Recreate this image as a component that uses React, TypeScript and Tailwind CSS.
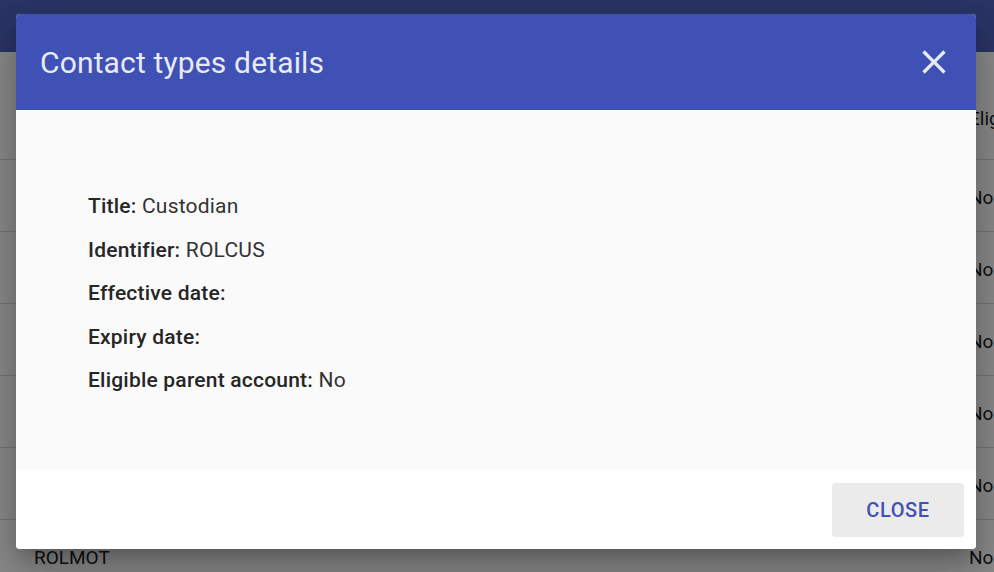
const rows = [
  {id: 'ROLAAA', eligible: 'No'},
  {id: 'ROLCUS', eligible: 'No'},
  {id: 'ROLDIR', eligible: 'No'},
  {id: 'ROLEXE', eligible: 'No'},
  {id: 'ROLGUA', eligible: 'No'},
  {id: 'ROLMOT', eligible: 'No'},
]

const details = [
  {label: 'Title:', value: 'Custodian'},
  {label: 'Identifier:', value: 'ROLCUS'},
  {label: 'Effective date:', value: ''},
  {label: 'Expiry date:', value: ''},
  {label: 'Eligible parent account:', value: 'No'},
]

function CloseIcon() {
  return (
    <svg viewBox="0 0 24 24" className="h-10 w-10" fill="currentColor">
      <path d="M19 6.41L17.59 5 12 10.59 6.41 5 5 6.41 10.59 12 5 17.59 6.41 19 12 13.41 17.59 19 19 17.59 13.41 12z" />
    </svg>
  )
}

export default function App() {
  return (
    <div className="relative h-[572px] w-[994px] overflow-hidden bg-white font-['Roboto',sans-serif] text-[#212121]">
      {/* page behind the dialog */}
      <div className="h-[52px] bg-[#5162bd]" />
      <div className="flex h-[108px] items-end justify-end border-b border-[#d6d6d6] pb-[26px]">
        <div className="w-[25px] overflow-hidden whitespace-nowrap text-[19px]">Elig</div>
      </div>
      {rows.map(r => (
        <div key={r.id} className="flex h-[72px] items-center justify-between border-b border-[#d6d6d6] pl-[34px] pt-[6px] text-[19px]">
          <span>{r.id}</span>
          <span className="w-[25px] overflow-hidden whitespace-nowrap">{r.eligible}</span>
        </div>
      ))}

      {/* backdrop */}
      <div className="absolute inset-0 bg-black/[0.46]" />

      {/* dialog */}
      <div className="absolute left-[16px] top-[14px] flex h-[535px] w-[960px] flex-col overflow-hidden rounded bg-white shadow-[0_11px_15px_-7px_rgba(0,0,0,0.2),0_24px_38px_3px_rgba(0,0,0,0.14),0_9px_46px_8px_rgba(0,0,0,0.12)]">
        <div className="flex h-[96px] items-center justify-between bg-[#3f51b5] pl-[24px] pr-[22px] text-[#e8eaf6]">
          <h2 className="text-[30px] font-normal tracking-[0.005em]">Contact types details</h2>
          <CloseIcon />
        </div>
        <div className="flex h-[360px] flex-col bg-[#fafafa] pl-[72px] pt-[75px] text-[21px] tracking-[0.01em]">
          {details.map(d => (
            <div key={d.label} className="h-[43.5px] leading-[43.5px] text-[#333]">
              <span className="font-medium text-[#262626]">{d.label}</span>
              {d.value ? ` ${d.value}` : null}
            </div>
          ))}
        </div>
        <div className="flex flex-1 items-start justify-end bg-white pr-[12px] pt-[13px]">
          <button className="h-[54px] w-[132px] rounded bg-[#ebebeb] text-[20px] font-medium tracking-[0.03em] text-[#3f51b5]">CLOSE</button>
        </div>
      </div>
    </div>
  )
}
